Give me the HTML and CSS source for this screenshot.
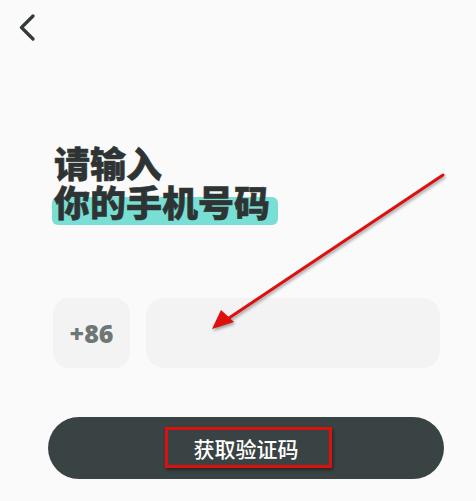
FILE: index.html
```html
<!DOCTYPE html>
<html lang="zh">
<head>
<meta charset="utf-8">
<link rel="stylesheet" href="styles.css">
</head>
<body>
<div class="page">
  <header class="topbar">
    <svg class="back" width="20" height="30" viewBox="0 0 20 30">
      <path d="M15 2 L3.5 13.5 L15 25" fill="none" stroke="#333a3a" stroke-width="3.2" stroke-linecap="round" stroke-linejoin="round"/>
    </svg>
  </header>
  <h1 class="title">
    <span class="line">请输入</span>
    <span class="line hl">你的手机号码</span>
  </h1>
  <div class="phone-row">
    <div class="code">+86</div>
    <div class="input"></div>
  </div>
  <div class="btn-wrap">
    <button class="btn">获取验证码</button>
  </div>
  <div class="mark-box"></div>
  <svg class="mark-arrow" width="476" height="501" viewBox="0 0 476 501">
    <line x1="443" y1="175" x2="226" y2="320" stroke="#dd1010" stroke-width="3" stroke-linecap="round"/>
    <polygon points="212,329 221,310 234,322" fill="#dd1010"/>
  </svg>
</div>
</body>
</html>
```
FILE: styles.css
```css
html, body {
  margin: 0;
  padding: 0;
  background: #fafafa;
}
.page {
  width: 476px;
  height: 501px;
  position: relative;
  overflow: hidden;
  font-family: "Noto Sans CJK SC", "Noto Sans", sans-serif;
}
.topbar {
  height: 60px;
  padding: 14px 0 0 18px;
  box-sizing: border-box;
}
.back {
  display: block;
}
.title {
  margin: 83px 0 0 54px;
  font-size: 36px;
  font-weight: 900;
  line-height: 39px;
  color: #2e3434;
  -webkit-text-stroke: 0.5px #2e3434;
}
.line {
  display: block;
  width: max-content;
  position: relative;
  z-index: 1;
}
.hl::before {
  content: "";
  position: absolute;
  left: -2px;
  right: -8px;
  top: 15px;
  height: 28px;
  background: #79dfd4;
  border-radius: 6px;
  z-index: -1;
}
.phone-row {
  display: flex;
  gap: 16px;
  margin: 77px 36px 0 53px;
  height: 70px;
}
.code {
  width: 77px;
  border-radius: 16px;
  background: #f3f3f3;
  display: flex;
  align-items: center;
  justify-content: center;
  font-family: "Open Sans", "Noto Sans", sans-serif;
  font-weight: 800;
  font-size: 25px;
  color: #6d7775;
}
.input {
  flex: 1;
  border-radius: 18px;
  background: #f3f3f3;
}
.btn-wrap {
  padding: 49px 32px 0 48px;
}
.btn {
  display: block;
  width: 100%;
  height: 62px;
  border: none;
  border-radius: 31px;
  background: #3a4343;
  color: #ffffff;
  font-family: "Noto Sans CJK SC", sans-serif;
  font-size: 21px;
  font-weight: 500;
  padding: 0;
}
.mark-box {
  position: absolute;
  left: 165px;
  top: 427px;
  width: 167px;
  height: 41px;
  box-sizing: border-box;
  border: 3px solid #dd1010;
  box-shadow: 1px 2px 3px rgba(0,0,0,0.45);
}
.mark-arrow {
  position: absolute;
  left: 0;
  top: 0;
  filter: drop-shadow(1px 2px 1.5px rgba(0,0,0,0.35));
  pointer-events: none;
}
```
